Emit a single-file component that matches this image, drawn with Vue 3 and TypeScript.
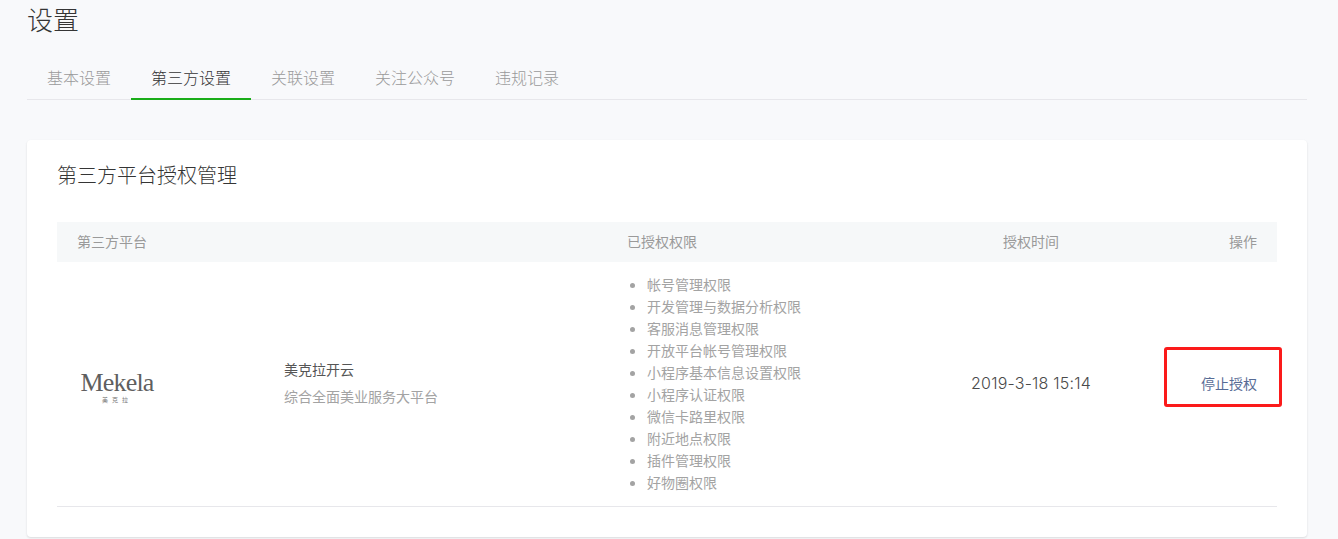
<script setup lang="ts">
const tabs: { label: string; active?: boolean }[] = [
  { label: '基本设置' },
  { label: '第三方设置', active: true },
  { label: '关联设置' },
  { label: '关注公众号' },
  { label: '违规记录' },
]
const perms: string[] = [
  '帐号管理权限',
  '开发管理与数据分析权限',
  '客服消息管理权限',
  '开放平台帐号管理权限',
  '小程序基本信息设置权限',
  '小程序认证权限',
  '微信卡路里权限',
  '附近地点权限',
  '插件管理权限',
  '好物圈权限',
]
</script>

<template>
  <div class="page">
    <h1 class="title">设置</h1>
    <nav class="tabs">
      <a v-for="t in tabs" :key="t.label" class="tab" :class="{ active: t.active }">{{ t.label }}</a>
    </nav>
    <section class="card">
      <h2 class="card-title">第三方平台授权管理</h2>
      <div class="grid head">
        <div class="c-platform">第三方平台</div>
        <div class="c-perm">已授权权限</div>
        <div class="c-time">授权时间</div>
        <div class="c-op">操作</div>
      </div>
      <div class="grid row">
        <div class="c-platform platform">
          <div class="logo">
            <span class="logo-en">Mekela</span>
            <span class="logo-cn">美克拉</span>
          </div>
          <div class="info">
            <div class="name">美克拉开云</div>
            <div class="desc">综合全面美业服务大平台</div>
          </div>
        </div>
        <ul class="c-perm perms">
          <li v-for="p in perms" :key="p">{{ p }}</li>
        </ul>
        <div class="c-time time">2019-3-18 15:14</div>
        <div class="c-op op">
          <a class="link">停止授权</a>
          <span class="mark"></span>
        </div>
      </div>
    </section>
  </div>
</template>

<style>
html, body { margin: 0; background: #f8f9fb; }
</style>

<style scoped>
.page {
  box-sizing: border-box;
  width: 1338px;
  height: 539px;
  overflow: hidden;
  padding: 0 31px 0 27px;
  background: #f8f9fb;
  font-family: "Noto Sans CJK SC", "Noto Sans", sans-serif;
  font-weight: 300;
  color: #353535;
}
.title {
  margin: 0;
  height: 58px;
  padding-top: 1px;
  box-sizing: border-box;
  font-size: 26px;
  line-height: 36px;
  font-weight: 300;
}
.tabs {
  display: flex;
  height: 42px;
  box-sizing: border-box;
  border-bottom: 1px solid #e7e7eb;
}
.tab {
  height: 42px;
  box-sizing: border-box;
  padding: 0 20px;
  font-size: 16px;
  line-height: 38px;
  color: #9a9a9a;
}
.tab.active {
  color: #353535;
  border-bottom: 2px solid #1aad19;
}
.card {
  margin-top: 40px;
  height: 397px;
  box-sizing: border-box;
  padding: 0 30px;
  background: #fff;
  border-radius: 4px;
  box-shadow: 0 1px 2px rgba(150, 150, 150, 0.3);
}
.card-title {
  margin: 0;
  height: 82px;
  padding-top: 19px;
  box-sizing: border-box;
  font-size: 20px;
  line-height: 32px;
  font-weight: 300;
}
.grid {
  display: grid;
  grid-template-columns: 570px 280px 248px 122px;
}
.head {
  height: 40px;
  box-sizing: border-box;
  padding-bottom: 2px;
  align-items: center;
  background: #f6f8f9;
  font-size: 14px;
  font-weight: 400;
  color: #9a9a9a;
}
.head .c-platform { padding-left: 20px; }
.c-time { text-align: center; }
.c-op { text-align: right; padding-right: 20px; }
.row {
  align-items: center;
  padding: 11px 0 13px;
  border-bottom: 1px solid #e7e7eb;
  font-size: 14px;
  font-weight: 400;
}
.platform {
  display: flex;
  align-items: center;
}
.logo {
  width: 227px;
  box-sizing: border-box;
  padding-left: 23px;
  padding-top: 8px;
  display: flex;
  flex-direction: column;
  color: #5f5f5f;
}
.logo-en {
  width: 74px;
  text-align: center;
  font-family: "Liberation Serif", serif;
  font-size: 26px;
  line-height: 26px;
  letter-spacing: -0.8px;
}
.logo-cn {
  width: 74px;
  text-align: center;
  font-size: 6px;
  line-height: 8px;
  letter-spacing: 4px;
  color: #777;
}
.info { margin-bottom: 2px; }
.name {
  line-height: 22px;
  color: #555;
}
.desc {
  margin-top: 5px;
  line-height: 22px;
  color: #a3a3a3;
}
.perms {
  margin: 0;
  padding: 0 0 0 20px;
  list-style: disc;
  color: #a3a3a3;
  line-height: 22px;
}
.time {
  font-family: Inter, "Noto Sans", sans-serif;
  font-size: 16px;
  letter-spacing: 0.2px;
  font-weight: 300;
  color: #4a4a4a;
}
.op { position: relative; }
.link { color: #576b95; }
.mark {
  position: absolute;
  left: 9px;
  top: -26px;
  width: 118px;
  height: 60px;
  box-sizing: border-box;
  border: 3px solid #fb1a1a;
  border-radius: 3px;
}
</style>
